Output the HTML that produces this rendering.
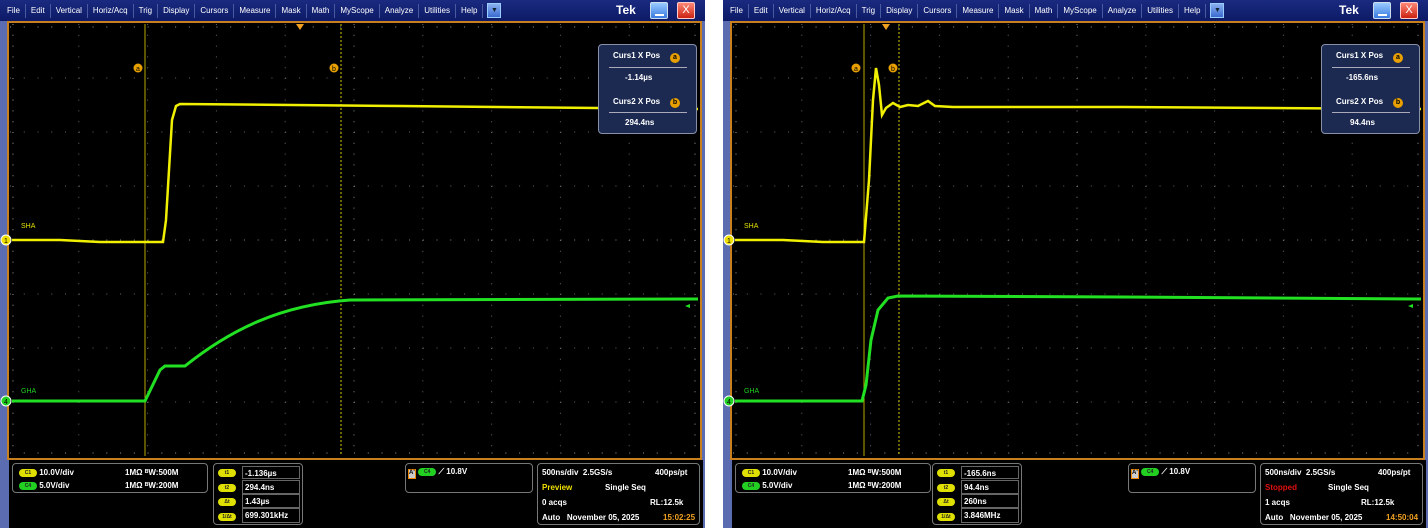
<!DOCTYPE html>
<html><head><meta charset="utf-8"><style>
*{margin:0;padding:0;box-sizing:border-box}
body{width:1428px;height:528px;background:#fff;position:relative;overflow:hidden;font-family:"Liberation Sans",sans-serif}
.scr{position:absolute;top:0;width:705px;height:528px;background:#5b6db0;overflow:hidden}
.menu{position:absolute;left:0;top:0;width:100%;height:21px;background:linear-gradient(#1a2a80,#0c1a66);display:flex;align-items:center;padding-left:2px}
.menu span{color:#fff;font-size:8px;padding:0 5px;border-right:1px solid #4a5aa0;line-height:14px}
.menu .dd{width:14px;height:15px;background:linear-gradient(#8ab0f0,#3a6ad0);border:1px solid #9cf;margin-left:4px;color:#123;font-size:7px;text-align:center;line-height:13px}
.tek{position:absolute;left:616px;top:3px;color:#fff;font-weight:bold;font-size:12px}
.bmin{position:absolute;left:650px;top:2px;width:18px;height:17px;background:linear-gradient(#9cf,#3a7ae0);border-radius:2px;border:1px solid #cde}
.bmin:after{content:"";position:absolute;left:4px;top:11px;width:9px;height:2px;background:#fff}
.bx{position:absolute;left:677px;top:2px;width:18px;height:17px;background:linear-gradient(#f87,#c21);border-radius:2px;border:1px solid #fcc;color:#fff;font-size:11px;text-align:center;line-height:15px}
.bot{position:absolute;left:9px;top:460px;width:694px;height:68px;background:#000}
.box{position:absolute;border:1px solid #777;border-radius:4px;color:#fff;font-size:8px;font-weight:bold}
.pill{display:inline-block;width:18px;height:8px;border-radius:4px;font-size:5px;text-align:center;line-height:8px;color:#222;vertical-align:middle}
.row{position:absolute;white-space:nowrap}
.cc{position:absolute;width:10px;height:10px;border-radius:5px;background:#e8a000;color:#000;font-size:7px;text-align:center;line-height:10px}
</style></head><body>

<!-- LEFT SCREEN -->
<div class="scr" style="left:0">
<div class="menu"><span>File</span><span>Edit</span><span>Vertical</span><span>Horiz/Acq</span><span>Trig</span><span>Display</span><span>Cursors</span><span>Measure</span><span>Mask</span><span>Math</span><span>MyScope</span><span>Analyze</span><span>Utilities</span><span>Help</span><div class="dd">▼</div></div>
<div class="tek">Tek</div><div class="bmin"></div><div class="bx">X</div>
<svg style="position:absolute;left:0;top:0" width="705" height="460">
<rect x="8" y="22" width="693" height="437" fill="#000" stroke="#c8801e" stroke-width="2"/>
<g stroke="#666" stroke-width="1" stroke-dasharray="1 9.8">
<line x1="78.8" y1="24" x2="78.8" y2="456"/><line x1="147.6" y1="24" x2="147.6" y2="456"/><line x1="216.4" y1="24" x2="216.4" y2="456"/><line x1="285.2" y1="24" x2="285.2" y2="456"/><line x1="422.8" y1="24" x2="422.8" y2="456"/><line x1="491.6" y1="24" x2="491.6" y2="456"/><line x1="560.4" y1="24" x2="560.4" y2="456"/><line x1="629.2" y1="24" x2="629.2" y2="456"/>
</g>
<g stroke="#666" stroke-width="1" stroke-dasharray="1 12.76">
<line x1="10" y1="78" x2="698" y2="78"/><line x1="10" y1="132" x2="698" y2="132"/><line x1="10" y1="186" x2="698" y2="186"/><line x1="10" y1="294" x2="698" y2="294"/><line x1="10" y1="348" x2="698" y2="348"/><line x1="10" y1="402" x2="698" y2="402"/>
</g>
<g stroke="#888" stroke-width="1"><line x1="354" y1="24" x2="354" y2="456" stroke-dasharray="1 9.8"/><line x1="10" y1="240" x2="698" y2="240" stroke-dasharray="1 12.76"/></g>
<g stroke="#999" stroke-width="1" stroke-dasharray="1 12.76"><line x1="10" y1="27" x2="698" y2="27"/><line x1="10" y1="453" x2="698" y2="453"/></g>
<g stroke="#999" stroke-width="1" stroke-dasharray="1 9.8"><line x1="13" y1="24" x2="13" y2="456"/><line x1="695" y1="24" x2="695" y2="456"/></g>
<line x1="145" y1="24" x2="145" y2="456" stroke="#b8a800" stroke-width="1"/>
<line x1="341" y1="24" x2="341" y2="456" stroke="#d8c800" stroke-width="1" stroke-dasharray="2 2"/>
<polygon points="296,24 304,24 300,30" fill="#f0a020"/>
<circle cx="138" cy="68" r="4.5" fill="#e8a000"/><text x="138" y="71" font-size="7" text-anchor="middle" fill="#000">a</text>
<circle cx="334" cy="68" r="4.5" fill="#e8a000"/><text x="334" y="71" font-size="7" text-anchor="middle" fill="#000">b</text>
<path d="M12 240 L60 240 L100 242 L163 242 L166 220 L172 120 L176 106 L180 104 L400 106 L698 109" fill="none" stroke="#f0f000" stroke-width="2.5"/>
<path d="M12 401 L145 401 L160 370 L165 366 L185 366 C230 330 280 305 350 300 L698 299" fill="none" stroke="#22e022" stroke-width="3"/>
<text x="21" y="228" font-size="7" fill="#e0e000">SHA</text>
<text x="21" y="393" font-size="7" fill="#20d020">GHA</text>
<circle cx="6" cy="240" r="5" fill="#f0e000" stroke="#fff" stroke-width="1"/><text x="6" y="243" font-size="7" text-anchor="middle">1</text>
<circle cx="6" cy="401" r="5" fill="#22d022" stroke="#fff" stroke-width="1"/><text x="6" y="404" font-size="7" text-anchor="middle">4</text>
<polygon points="690,308 685,306 690,304" fill="#22e022"/>
</svg>
<div class="box" style="left:598px;top:44px;width:99px;height:90px;background:#1c2a52;border-color:#8890a8">
<div class="row" style="left:14px;top:6px">Curs1 X Pos</div>
<div class="cc" style="left:71px;top:8px">a</div>
<div style="position:absolute;left:10px;top:22px;width:78px;height:1px;background:#aab"></div>
<div class="row" style="left:26px;top:28px">-1.14µs</div>
<div class="row" style="left:14px;top:52px">Curs2 X Pos</div>
<div class="cc" style="left:71px;top:53px">b</div>
<div style="position:absolute;left:10px;top:67px;width:78px;height:1px;background:#aab"></div>
<div class="row" style="left:26px;top:73px">294.4ns</div>
</div>
<div class="bot"></div>
<div class="box" style="left:12px;top:463px;width:196px;height:30px">
<div class="row" style="left:6px;top:4px"><span class="pill" style="background:#e0e000">C1</span> 10.0V/div</div><div class="row" style="left:112px;top:4px">1MΩ ᴮW:500M</div>
<div class="row" style="left:6px;top:17px"><span class="pill" style="background:#22d022">C4</span> 5.0V/div</div><div class="row" style="left:112px;top:17px">1MΩ ᴮW:200M</div>
</div>
<div class="box" style="left:213px;top:463px;width:90px;height:62px">
<div class="row" style="left:4px;top:4px"><span class="pill" style="background:#e0e000">t1</span></div><div class="row" style="left:28px;top:2px;width:58px;border:1px solid #666;height:13px;padding:2px">-1.136µs</div>
<div class="row" style="left:4px;top:19px"><span class="pill" style="background:#e0e000">t2</span></div><div class="row" style="left:28px;top:16px;width:58px;border:1px solid #666;height:14px;padding:2px">294.4ns</div>
<div class="row" style="left:4px;top:33px"><span class="pill" style="background:#e0e000">Δt</span></div><div class="row" style="left:28px;top:30px;width:58px;border:1px solid #666;height:14px;padding:2px">1.43µs</div>
<div class="row" style="left:4px;top:48px"><span class="pill" style="background:#e0e000">1/Δt</span></div><div class="row" style="left:28px;top:44px;width:58px;border:1px solid #666;height:15px;padding:2px">699.301kHz</div>
</div>
<div class="box" style="left:405px;top:463px;width:128px;height:30px">
<div class="row" style="left:2px;top:3px"><span style="display:inline-block;width:8px;height:10px;background:#ccc;border:1px solid #e80;color:#000;font-size:6px">A'</span> <span class="pill" style="background:#22d022">C4</span> ⟋ 10.8V</div>
</div>
<div class="box" style="left:537px;top:463px;width:163px;height:62px">
<div class="row" style="left:4px;top:4px">500ns/div&nbsp; 2.5GS/s</div><div class="row" style="left:117px;top:4px">400ps/pt</div>
<div class="row" style="left:4px;top:19px;color:#f0e000">Preview</div><div class="row" style="left:67px;top:19px">Single Seq</div>
<div class="row" style="left:4px;top:34px">0 acqs</div><div class="row" style="left:112px;top:34px">RL:12.5k</div>
<div class="row" style="left:4px;top:49px">Auto&nbsp;&nbsp; November 05, 2025</div><div class="row" style="left:125px;top:49px;color:#f0a020">15:02:25</div>
</div>
</div>

<!-- RIGHT SCREEN -->
<div class="scr" style="left:723px">
<div class="menu"><span>File</span><span>Edit</span><span>Vertical</span><span>Horiz/Acq</span><span>Trig</span><span>Display</span><span>Cursors</span><span>Measure</span><span>Mask</span><span>Math</span><span>MyScope</span><span>Analyze</span><span>Utilities</span><span>Help</span><div class="dd">▼</div></div>
<div class="tek">Tek</div><div class="bmin"></div><div class="bx">X</div>
<svg style="position:absolute;left:0;top:0" width="705" height="460">
<rect x="8" y="22" width="693" height="437" fill="#000" stroke="#c8801e" stroke-width="2"/>
<g stroke="#666" stroke-width="1" stroke-dasharray="1 9.8">
<line x1="78.8" y1="24" x2="78.8" y2="456"/><line x1="147.6" y1="24" x2="147.6" y2="456"/><line x1="216.4" y1="24" x2="216.4" y2="456"/><line x1="285.2" y1="24" x2="285.2" y2="456"/><line x1="422.8" y1="24" x2="422.8" y2="456"/><line x1="491.6" y1="24" x2="491.6" y2="456"/><line x1="560.4" y1="24" x2="560.4" y2="456"/><line x1="629.2" y1="24" x2="629.2" y2="456"/>
</g>
<g stroke="#666" stroke-width="1" stroke-dasharray="1 12.76">
<line x1="10" y1="78" x2="698" y2="78"/><line x1="10" y1="132" x2="698" y2="132"/><line x1="10" y1="186" x2="698" y2="186"/><line x1="10" y1="294" x2="698" y2="294"/><line x1="10" y1="348" x2="698" y2="348"/><line x1="10" y1="402" x2="698" y2="402"/>
</g>
<g stroke="#888" stroke-width="1"><line x1="354" y1="24" x2="354" y2="456" stroke-dasharray="1 9.8"/><line x1="10" y1="240" x2="698" y2="240" stroke-dasharray="1 12.76"/></g>
<g stroke="#999" stroke-width="1" stroke-dasharray="1 12.76"><line x1="10" y1="27" x2="698" y2="27"/><line x1="10" y1="453" x2="698" y2="453"/></g>
<g stroke="#999" stroke-width="1" stroke-dasharray="1 9.8"><line x1="13" y1="24" x2="13" y2="456"/><line x1="695" y1="24" x2="695" y2="456"/></g>
<line x1="141" y1="24" x2="141" y2="456" stroke="#b8a800" stroke-width="1"/>
<line x1="176" y1="24" x2="176" y2="456" stroke="#d8c800" stroke-width="1" stroke-dasharray="2 2"/>
<polygon points="159,24 167,24 163,30" fill="#f0a020"/>
<circle cx="133" cy="68" r="4.5" fill="#e8a000"/><text x="133" y="71" font-size="7" text-anchor="middle" fill="#000">a</text>
<circle cx="170" cy="68" r="4.5" fill="#e8a000"/><text x="170" y="71" font-size="7" text-anchor="middle" fill="#000">b</text>
<path d="M12 240 L60 240 L100 242 L141 242 L146 180 L150 100 L153 68 L156 85 L159 115 L163 108 L170 103 L177 107 L185 105 L195 106 L205 101 L212 106 L230 107 L400 107 L698 109" fill="none" stroke="#f0f000" stroke-width="2.5"/>
<path d="M12 401 L139 401 L143 385 L148 340 L155 310 L165 298 L175 296 L400 297 L698 299" fill="none" stroke="#22e022" stroke-width="3"/>
<text x="21" y="228" font-size="7" fill="#e0e000">SHA</text>
<text x="21" y="393" font-size="7" fill="#20d020">GHA</text>
<circle cx="6" cy="240" r="5" fill="#f0e000" stroke="#fff" stroke-width="1"/><text x="6" y="243" font-size="7" text-anchor="middle">1</text>
<circle cx="6" cy="401" r="5" fill="#22d022" stroke="#fff" stroke-width="1"/><text x="6" y="404" font-size="7" text-anchor="middle">4</text>
<polygon points="690,308 685,306 690,304" fill="#22e022"/>
</svg>
<div class="box" style="left:598px;top:44px;width:99px;height:90px;background:#1c2a52;border-color:#8890a8">
<div class="row" style="left:14px;top:6px">Curs1 X Pos</div>
<div class="cc" style="left:71px;top:8px">a</div>
<div style="position:absolute;left:10px;top:22px;width:78px;height:1px;background:#aab"></div>
<div class="row" style="left:24px;top:28px">-165.6ns</div>
<div class="row" style="left:14px;top:52px">Curs2 X Pos</div>
<div class="cc" style="left:71px;top:53px">b</div>
<div style="position:absolute;left:10px;top:67px;width:78px;height:1px;background:#aab"></div>
<div class="row" style="left:28px;top:73px">94.4ns</div>
</div>
<div class="bot"></div>
<div class="box" style="left:12px;top:463px;width:196px;height:30px">
<div class="row" style="left:6px;top:4px"><span class="pill" style="background:#e0e000">C1</span> 10.0V/div</div><div class="row" style="left:112px;top:4px">1MΩ ᴮW:500M</div>
<div class="row" style="left:6px;top:17px"><span class="pill" style="background:#22d022">C4</span> 5.0V/div</div><div class="row" style="left:112px;top:17px">1MΩ ᴮW:200M</div>
</div>
<div class="box" style="left:209px;top:463px;width:90px;height:62px">
<div class="row" style="left:4px;top:4px"><span class="pill" style="background:#e0e000">t1</span></div><div class="row" style="left:28px;top:2px;width:58px;border:1px solid #666;height:13px;padding:2px">-165.6ns</div>
<div class="row" style="left:4px;top:19px"><span class="pill" style="background:#e0e000">t2</span></div><div class="row" style="left:28px;top:16px;width:58px;border:1px solid #666;height:14px;padding:2px">94.4ns</div>
<div class="row" style="left:4px;top:33px"><span class="pill" style="background:#e0e000">Δt</span></div><div class="row" style="left:28px;top:30px;width:58px;border:1px solid #666;height:14px;padding:2px">260ns</div>
<div class="row" style="left:4px;top:48px"><span class="pill" style="background:#e0e000">1/Δt</span></div><div class="row" style="left:28px;top:44px;width:58px;border:1px solid #666;height:15px;padding:2px">3.846MHz</div>
</div>
<div class="box" style="left:405px;top:463px;width:128px;height:30px">
<div class="row" style="left:2px;top:3px"><span style="display:inline-block;width:8px;height:10px;background:#ccc;border:1px solid #e80;color:#000;font-size:6px">A'</span> <span class="pill" style="background:#22d022">C4</span> ⟋ 10.8V</div>
</div>
<div class="box" style="left:537px;top:463px;width:163px;height:62px">
<div class="row" style="left:4px;top:4px">500ns/div&nbsp; 2.5GS/s</div><div class="row" style="left:117px;top:4px">400ps/pt</div>
<div class="row" style="left:4px;top:19px;color:#e01010">Stopped</div><div class="row" style="left:67px;top:19px">Single Seq</div>
<div class="row" style="left:4px;top:34px">1 acqs</div><div class="row" style="left:100px;top:34px">RL:12.5k</div>
<div class="row" style="left:4px;top:49px">Auto&nbsp;&nbsp; November 05, 2025</div><div class="row" style="left:125px;top:49px;color:#f0a020">14:50:04</div>
</div>
</div>
</body></html>
